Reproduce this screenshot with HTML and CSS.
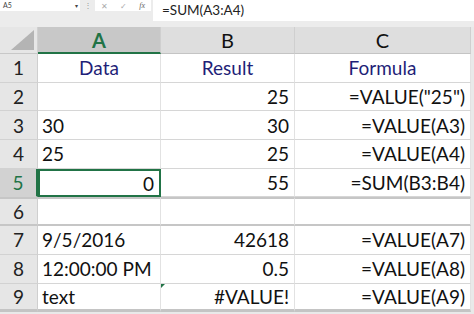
FILE: index.html
```html
<!DOCTYPE html>
<html lang="en">
<head>
  <meta charset="UTF-8">
  <title>VALUE function</title>
  <link rel="stylesheet" href="styles.css">
</head>
<body>

  <div class="toolbar">
    <div class="name-box">A5<span class="drop">&#9662;</span></div>
    <div class="dots">&#8942;</div>
    <div class="fx-buttons">
      <span class="fx-btn">&#10005;</span>
      <span class="fx-btn">&#10003;</span>
      <span class="fx-btn fx">fx</span>
    </div>
    <div class="formula-bar">=SUM(A3:A4)</div>
  </div>

  <div class="sheet">
    <div class="corner"><span class="tri"></span></div>
    <div class="col-head active">A</div>
    <div class="col-head">B</div>
    <div class="col-head">C</div>

    <div class="row-head">1</div>
    <div class="cell center title">Data</div>
    <div class="cell center title">Result</div>
    <div class="cell center title">Formula</div>

    <div class="row-head">2</div>
    <div class="cell"></div>
    <div class="cell num">25</div>
    <div class="cell num">=VALUE("25")</div>

    <div class="row-head">3</div>
    <div class="cell">30</div>
    <div class="cell num">30</div>
    <div class="cell num">=VALUE(A3)</div>

    <div class="row-head">4</div>
    <div class="cell">25</div>
    <div class="cell num">25</div>
    <div class="cell num">=VALUE(A4)</div>

    <div class="row-head active">5</div>
    <div class="cell num selected">0</div>
    <div class="cell num">55</div>
    <div class="cell num">=SUM(B3:B4)</div>

    <div class="row-head thick">6</div>
    <div class="cell thick"></div>
    <div class="cell thick"></div>
    <div class="cell thick"></div>

    <div class="row-head">7</div>
    <div class="cell">9/5/2016</div>
    <div class="cell num">42618</div>
    <div class="cell num">=VALUE(A7)</div>

    <div class="row-head">8</div>
    <div class="cell">12:00:00 PM</div>
    <div class="cell num">0.5</div>
    <div class="cell num">=VALUE(A8)</div>

    <div class="row-head last">9</div>
    <div class="cell last">text</div>
    <div class="cell num last error">#VALUE!</div>
    <div class="cell num last">=VALUE(A9)</div>
  </div>

</body>
</html>
```

FILE: styles.css
```css
* {
  margin: 0;
  padding: 0;
  box-sizing: border-box;
}

body {
  font-family: Lato, "Open Sans", sans-serif;
  background: #e9e9e9;
  width: 474px;
  height: 314px;
  overflow: hidden;
}

/* Bar atas: kotak nama + formula */
.toolbar {
  display: flex;
  align-items: flex-start;
  height: 27px;
  background: #ececec;
  color: #444;
}

.name-box {
  width: 80px;
  height: 11px;
  background: white;
  font-size: 7px;
  line-height: 11px;
  padding-left: 3px;
  display: flex;
  justify-content: space-between;
}

.drop {
  font-size: 6px;
  padding-right: 2px;
}

.dots {
  width: 15px;
  font-size: 8px;
  line-height: 11px;
  text-align: center;
  color: #999;
}

.fx-buttons {
  width: 56px;
  height: 11px;
  background: white;
  display: flex;
  justify-content: space-around;
  align-items: center;
  color: #aaa;
  font-size: 8px;
}

.fx {
  font-family: "Liberation Serif", serif;
  font-style: italic;
  color: #666;
}

.formula-bar {
  flex: 1;
  height: 21px;
  margin-left: 2px;
  background: white;
  font-size: 13.5px;
  line-height: 20px;
  padding-left: 9px;
  color: #222;
}

/* Lembar kerja */
.sheet {
  display: grid;
  grid-template-columns: 38px 123px 134px 176px;
  grid-template-rows: 27px repeat(9, 28.7px);
  background: white;
  width: 471px;
  font-size: 19px;
  color: #111;
}

.corner {
  background: #e6e6e6;
  border-right: 1px solid #d0d0d0;
  border-bottom: 1px solid #c8c8c8;
  position: relative;
}

.tri {
  position: absolute;
  right: 3px;
  bottom: 3px;
  width: 0;
  height: 0;
  border-left: 23px solid transparent;
  border-bottom: 20px solid #b4b4b4;
}

.col-head {
  background: #dedede;
  border-right: 1px solid #cfcfcf;
  border-bottom: 1px solid #c4c4c4;
  display: flex;
  align-items: center;
  justify-content: center;
  font-size: 20px;
  color: #111;
}

.col-head.active {
  background: #c8c8c8;
  color: #217346;
  font-weight: bold;
  border-bottom: 2px solid #217346;
}

.row-head {
  background: #e6e6e6;
  border-right: 1px solid #cfcfcf;
  border-bottom: 1px solid #d2d2d2;
  display: flex;
  align-items: center;
  justify-content: center;
  font-size: 19px;
  color: #222;
}

.row-head.active {
  background: #d2d2d2;
  color: #217346;
  border-right: 2px solid #217346;
}

.cell {
  border-right: 1px solid #e2e2e2;
  border-bottom: 1px solid #d6d6d6;
  display: flex;
  align-items: center;
  padding: 0 4px;
  white-space: nowrap;
}

.num {
  justify-content: flex-end;
  padding-right: 5px;
}

.center {
  justify-content: center;
}

.title {
  color: #1f1f78;
}

.selected {
  border: 2px solid #217346;
}

.thick {
  border-top: 2px solid #c6c6c6;
  border-bottom: 2px solid #c6c6c6;
}

.last {
  border-bottom: 3px solid #c4c4c4;
}

/* Tanda segitiga hijau error */
.error {
  position: relative;
}

.error::before {
  content: "";
  position: absolute;
  left: 0;
  top: 0;
  border-top: 4px solid #217346;
  border-right: 4px solid transparent;
}
```
